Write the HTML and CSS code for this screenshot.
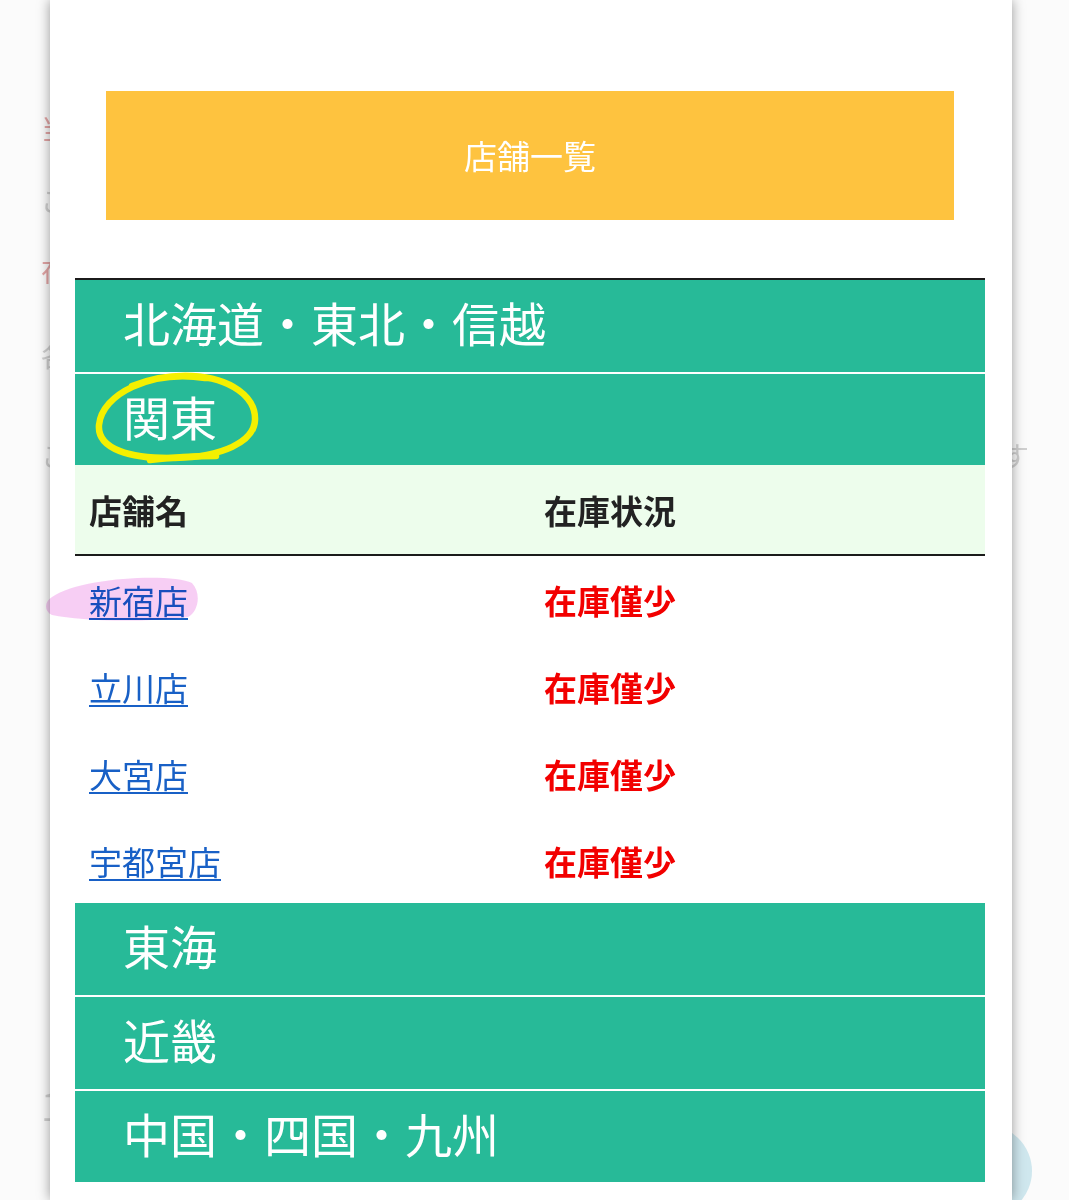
FILE: index.html
```html
<!DOCTYPE html>
<html lang="ja">
<head>
<meta charset="utf-8">
<title>店舗一覧</title>
<link rel="stylesheet" href="styles.css">
</head>
<body>
<div class="page">
  <div class="bg">
    <div class="bg-left">
      <p class="bg-line red g1">当店</p>
      <p class="bg-line gray g2">ご来</p>
      <p class="bg-line red g3">在庫</p>
      <p class="bg-line gray g4">各店</p>
      <p class="bg-line gray g5">こち</p>
      <p class="bg-line gray g6 big">1</p>
    </div>
    <div class="bg-right">
      <p class="bg-line gray r1">す</p>
    </div>
  </div>
  <div class="fab"></div>

  <div class="modal">
    <div class="title-btn">店舗一覧</div>
    <div class="accordion">
      <div class="region first">北海道・東北・信越</div>
      <div class="region open">関東</div>
      <table class="stock">
        <thead>
          <tr><th>店舗名</th><th>在庫状況</th></tr>
        </thead>
        <tbody>
          <tr><td><a href="#">新宿店</a></td><td class="low">在庫僅少</td></tr>
          <tr><td><a href="#">立川店</a></td><td class="low">在庫僅少</td></tr>
          <tr><td><a href="#">大宮店</a></td><td class="low">在庫僅少</td></tr>
          <tr><td><a href="#">宇都宮店</a></td><td class="low">在庫僅少</td></tr>
        </tbody>
      </table>
      <div class="region">東海</div>
      <div class="region">近畿</div>
      <div class="region last">中国・四国・九州</div>
    </div>
  </div>

  <svg class="marks" width="1069" height="1200" viewBox="0 0 1069 1200" aria-hidden="true">
    <path class="hl" d="M52 597 C 80 577, 172 573, 192 583 C 202 594, 198 612, 188 617 C 140 623, 80 621, 52 615 C 44 611, 44 602, 52 597 Z"/>
    <path class="circle" d="M205 378 C 150 370, 102 394, 99 425 C 97 449, 130 459, 175 458 C 222 457, 254 442, 255 420 C 256 397, 231 378, 192 376 C 170 375, 150 379, 132 386"/>
    <path class="circle" d="M150 460 C 175 457, 200 456, 216 456"/>
  </svg>
</div>
</body>
</html>
```

FILE: styles.css
```css
* { box-sizing: border-box; }

html, body {
  margin: 0;
  padding: 0;
}

body {
  width: 1069px;
  height: 1200px;
  overflow: hidden;
  background: #fbfbfb;
  font-family: "Noto Sans CJK JP", "Noto Sans", sans-serif;
}

.page {
  position: relative;
  width: 1069px;
  height: 1200px;
  overflow: hidden;
}

/* faded page behind the modal */
.bg {
  display: flex;
  justify-content: space-between;
  padding: 108px 40px 0 41px;
}

.bg-left, .bg-right {
  display: flex;
  flex-direction: column;
}

.bg-right {
  padding-top: 327px;
}

.bg-line {
  margin: 0;
  height: 40px;
  line-height: 40px;
  font-size: 28px;
  white-space: nowrap;
}

.bg-line.red { color: #e2a5a5; }
.bg-line.gray { color: #d0d0d0; }
.g1 { margin-bottom: 32px; }
.g2 { margin-bottom: 30px; }
.g3 { margin-bottom: 45px; }
.g4 { margin-bottom: 60px; }
.g5 { margin-bottom: 610px; }
.big { font-size: 38px; }

.fab {
  position: absolute;
  left: 940px;
  top: 1125px;
  width: 92px;
  height: 92px;
  border-radius: 50%;
  background: #cfe7ee;
}

/* modal panel */
.modal {
  position: absolute;
  left: 50px;
  top: 0;
  width: 962px;
  height: 1200px;
  background: #ffffff;
  box-shadow: 0 0 12px rgba(0, 0, 0, 0.4);
  padding: 91px 27px 0 25px;
}

.title-btn {
  margin: 0 31px;
  height: 129px;
  background: #fec33f;
  color: #ffffff;
  font-size: 33px;
  display: flex;
  align-items: center;
  justify-content: center;
  padding-bottom: 2px;
}

.accordion {
  margin-top: 58px;
  border-top: 2px solid #1b1b1b;
}

.region {
  height: 94px;
  background: #27ba98;
  color: #ffffff;
  font-size: 47px;
  padding: 0 0 9px 48px;
  display: flex;
  align-items: center;
  border-bottom: 2px solid #ffffff;
}

.region.open { border-bottom: none; height: 91px; }
.region.last { border-bottom: none; height: 91px; }

.stock {
  width: 100%;
  border-collapse: collapse;
  table-layout: fixed;
}

.stock th {
  height: 90px;
  background: #edfdec;
  border-bottom: 2px solid #1b1b1b;
  text-align: left;
  font-size: 33px;
  font-weight: 700;
  color: #222222;
  padding: 0 14px;
}

.stock td {
  height: 87px;
  padding: 2px 14px 0;
  font-size: 33px;
}

.stock a {
  color: #1860c6;
  text-decoration: underline;
  text-decoration-thickness: 2px;
  text-underline-offset: 4px;
}

.stock td.low {
  color: #f20000;
  font-weight: 700;
}

/* hand-drawn annotations */
.marks {
  position: absolute;
  left: 0;
  top: 0;
  pointer-events: none;
}

.marks .hl {
  fill: #f6c6f3;
  mix-blend-mode: multiply;
  opacity: 0.85;
}

.marks .circle {
  fill: none;
  stroke: #f4f000;
  stroke-width: 6.5;
  stroke-linecap: round;
  stroke-linejoin: round;
}
```
